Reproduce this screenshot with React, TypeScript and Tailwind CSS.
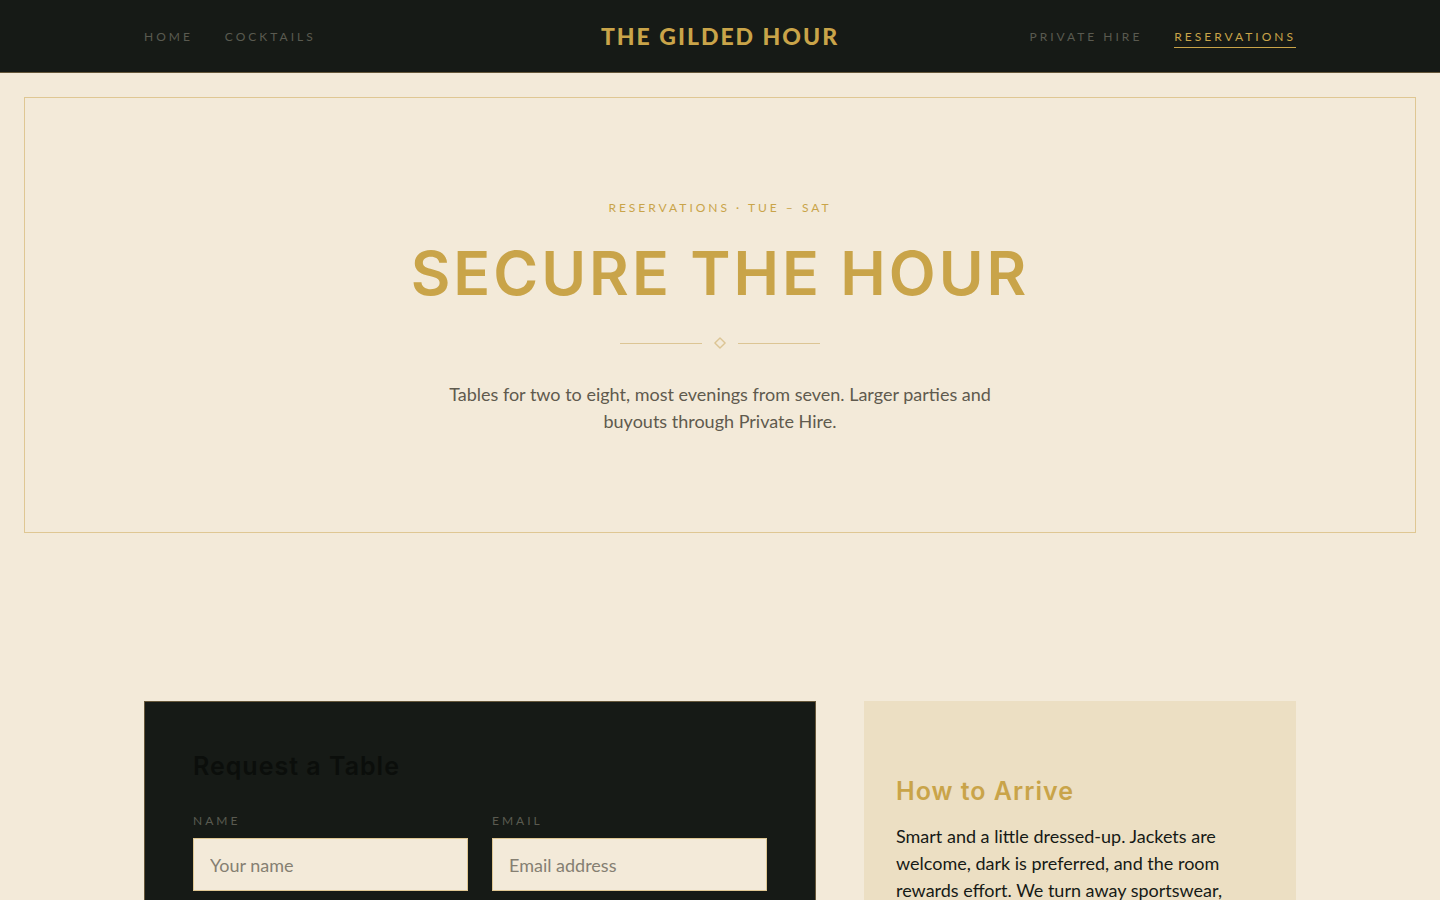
import type { ReactNode } from "react";

function NavLink({ href, active, children }: { href: string; active?: boolean; children: ReactNode }) {
  return (
    <a
      href={href}
      aria-current={active ? "page" : undefined}
      className={
        active
          ? "border-b border-[#c9a449] pb-0.5 text-[#c9a449]"
          : "border-b border-transparent pb-0.5 text-[#5a5a50]"
      }
    >
      {children}
    </a>
  );
}

function Header() {
  return (
    <header className="border-b border-[#65573a] bg-[#161a16]">
      <div className="mx-auto grid h-18 max-w-6xl grid-cols-[1fr_auto_1fr] items-center">
        <nav aria-label="Main" className="flex gap-8 pt-1 text-[12px] leading-4 tracking-[3px] uppercase">
          <NavLink href="#home">Home</NavLink>
          <NavLink href="#cocktails">Cocktails</NavLink>
        </nav>
        <a href="#home" className="text-[23px] leading-7 font-black tracking-[2px] text-[#c9a449] uppercase">
          The Gilded Hour
        </a>
        <nav
          aria-label="Visit"
          className="flex justify-end gap-8 pt-1 text-[12px] leading-4 tracking-[3px] uppercase"
        >
          <NavLink href="#private-hire">Private Hire</NavLink>
          <NavLink href="#reservations" active>
            Reservations
          </NavLink>
        </nav>
      </div>
    </header>
  );
}

function Ornament() {
  return (
    <div className="mt-8 flex items-center justify-center gap-3 text-[#dcc594]" aria-hidden="true">
      <span className="h-px w-[82px] bg-current" />
      <svg
        width="12"
        height="12"
        viewBox="0 0 12 12"
        fill="none"
        stroke="currentColor"
        strokeWidth="1.4"
        strokeLinejoin="round"
      >
        <path d="M6 .9 11.1 6 6 11.1.9 6Z" />
      </svg>
      <span className="h-px w-[82px] bg-current" />
    </div>
  );
}

function Hero() {
  return (
    <section className="m-6 border border-[#dfc793] px-6 pt-24 pb-[97px] text-center">
      <p className="text-[12px] leading-[27px] tracking-[3px] text-[#c9a449] uppercase">
        Reservations · Tue – Sat
      </p>
      <h1 className="mt-5 font-['Inter'] text-[61px] leading-[64px] font-semibold tracking-[3px] text-[#c9a449] uppercase">
        Secure the Hour
      </h1>
      <Ornament />
      <p className="mx-auto mt-8 max-w-[560px] text-[18px] leading-[27px] text-[#5f5a4e]">
        Tables for two to eight, most evenings from seven. Larger parties and buyouts through Private Hire.
      </p>
    </section>
  );
}

function Field({ id, label, type, placeholder }: { id: string; label: string; type: string; placeholder: string }) {
  return (
    <div className="flex min-w-0 flex-col gap-2.5">
      <label htmlFor={id} className="text-[12px] leading-[14px] tracking-[3px] text-[#5a5a50] uppercase">
        {label}
      </label>
      <input
        id={id}
        type={type}
        placeholder={placeholder}
        className="h-[53px] w-full border border-[#dfc793] bg-[#f3ead9] px-4 text-[18px] text-[#161a16] placeholder:text-[#857f72]"
      />
    </div>
  );
}

function RequestForm() {
  return (
    <form className="border border-[#65573a] bg-[#161a16] p-12">
      <h2 className="font-['Inter'] text-[25px] leading-8 font-semibold tracking-[1px] text-[#0b0e0b]">
        Request a Table
      </h2>
      <div className="mt-8 grid grid-cols-2 gap-6">
        <Field id="name" label="Name" type="text" placeholder="Your name" />
        <Field id="email" label="Email" type="email" placeholder="Email address" />
      </div>
    </form>
  );
}

function ArrivalNotes() {
  return (
    <aside className="bg-[#ecdfc3] px-8 py-18">
      <h2 className="font-['Inter'] text-[25px] leading-9 font-semibold tracking-[1px] text-[#c9a449]">
        How to Arrive
      </h2>
      <p className="mt-3.5 max-w-[336px] text-[18px] leading-[27px]">
        Smart and a little dressed-up. Jackets are welcome, dark is preferred, and the room rewards effort. We turn
        away sportswear,
      </p>
    </aside>
  );
}

export default function App() {
  return (
    <div className="min-h-screen bg-[#f3ead9] font-['Lato',sans-serif] text-[#161a16]">
      <Header />
      <main className="flow-root">
        <Hero />
        <div className="mx-auto mt-42 grid max-w-6xl grid-cols-[14fr_9fr] gap-12">
          <RequestForm />
          <ArrivalNotes />
        </div>
      </main>
    </div>
  );
}
